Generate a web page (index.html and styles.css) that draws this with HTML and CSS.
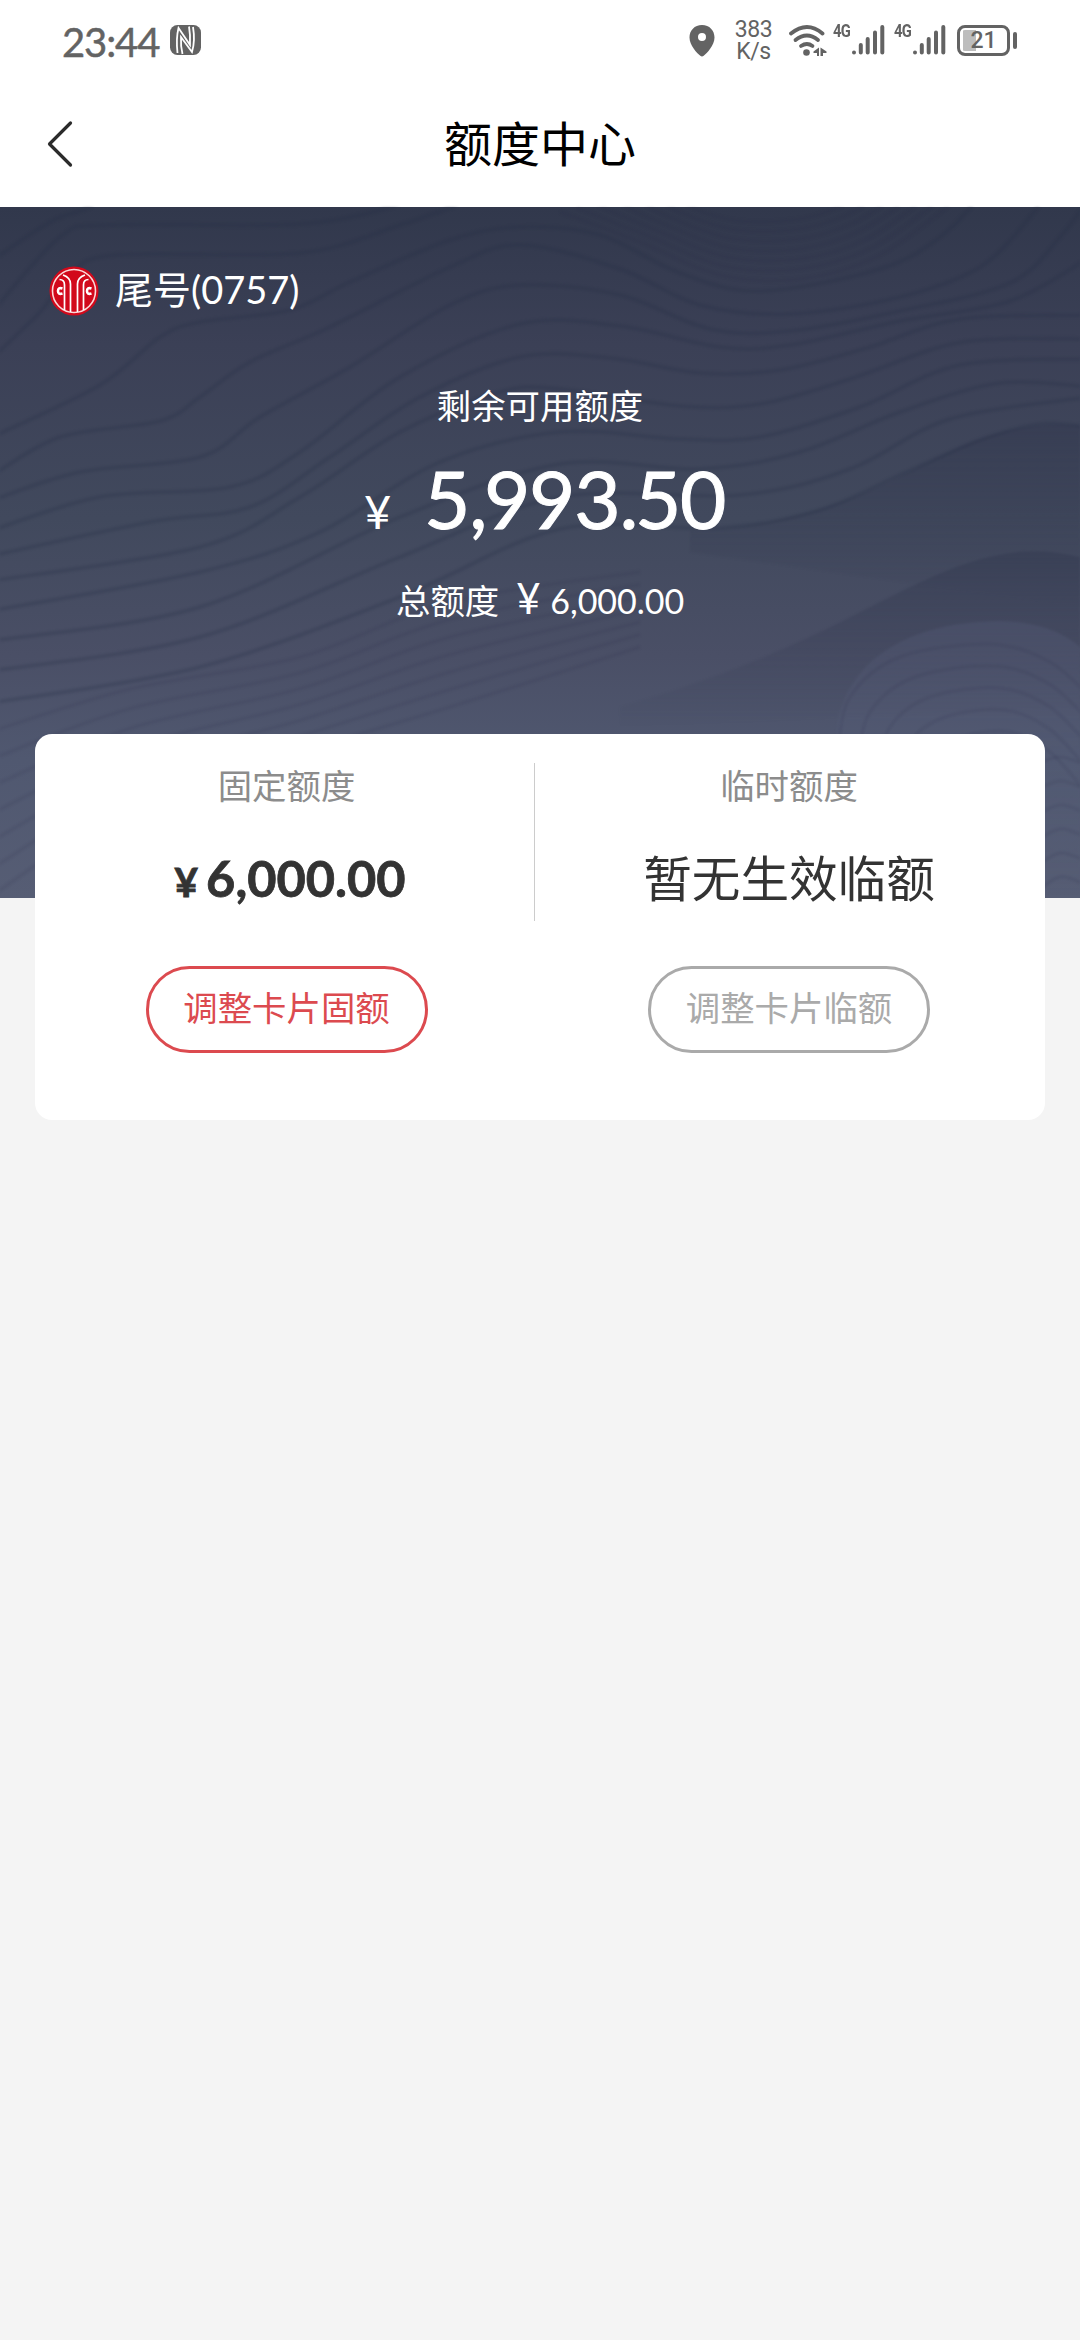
FILE: index.html
```
<!DOCTYPE html>
<html lang="zh-CN">
<head>
<meta charset="utf-8">
<title>额度中心</title>
<link rel="stylesheet" href="styles.css">
</head>
<body>
<header class="status">
  <span class="clock">23:44</span>
  <svg class="nfc" width="31" height="30" viewBox="0 0 31 30">
    <rect width="31" height="30" rx="7.5" fill="#636363"/>
    <path d="M7.5 28C6.5 19 6.5 11 8.5 3L20 20C20.3 13 20 7 19 1.5" fill="none" stroke="#fff" stroke-width="1.8"/>
    <path d="M23 2C24.500 11 24.500 19 22 27L11 12C10.700 18 11 23 12.500 29" fill="none" stroke="#fff" stroke-width="1.8"/>
  </svg>
  <span class="spacer"></span>
  <svg class="pin" width="26" height="32" viewBox="0 0 26 32">
    <path fill="#636363" fill-rule="evenodd" d="M13 0C5.500 0 .5 5.500 .5 12.500C.5 20.500 8 28 11.300 30.800Q13 32 14.700 30.800C18 28 25.500 20.500 25.500 12.500C25.500 5.500 20.500 0 13 0ZM13 8A4 4 0 1 1 13 16A4 4 0 1 1 13 8Z"/>
  </svg>
  <span class="speed"><span>383</span><span>K/s</span></span>
  <svg class="wifi" width="38" height="32" viewBox="0 0 38 32">
    <g fill="none" stroke="#636363" stroke-width="3.800" stroke-linecap="round">
      <path d="M2 8.500Q18 -4.500 33.500 8.500"/>
      <path d="M6.500 15Q18 6 29 15"/>
      <path d="M12 21Q18 17 23.500 21"/>
    </g>
    <circle cx="17.500" cy="27.500" r="3.300" fill="#636363"/>
    <path fill="#636363" d="M24.500 26.500L30 22.500V31H28V28H24.500ZM31.500 22.500L37.500 26.500V28H34V31H31.500Z"/>
  </svg>
  <span class="signal">
    <span class="net">4G</span>
    <svg width="34" height="32" viewBox="0 0 34 32" stroke="#636363" stroke-width="4" stroke-linecap="round"><path d="M3 28.500V28.600M9.800 21V28.500M16.700 15V28.500M24 8.500V28.500M31.300 3V28.500"/></svg>
  </span>
  <span class="signal">
    <span class="net">4G</span>
    <svg width="34" height="32" viewBox="0 0 34 32" stroke="#636363" stroke-width="4" stroke-linecap="round"><path d="M3 28.500V28.600M9.800 21V28.500M16.700 15V28.500M24 8.500V28.500M31.300 3V28.500"/></svg>
  </span>
  <span class="battery"><span class="cell">21</span><span class="tip"></span></span>
</header>

<nav class="nav">
  <svg class="back" width="28" height="48" viewBox="0 0 28 48"><path d="M24.500 3L3.500 24L24.500 45" fill="none" stroke="#2b2b2b" stroke-width="3.200" stroke-linecap="round" stroke-linejoin="round"/></svg>
  <h1 class="title">额度中心</h1>
</nav>

<section class="hero">
  <svg class="waves" viewBox="0 0 1080 691" aria-hidden="true">
    <defs>
      <linearGradient id="ridge" x1="0" y1="0" x2="0" y2="1"><stop offset="0" stop-color="#30364d" stop-opacity=".4"/><stop offset="1" stop-color="#30364d" stop-opacity="0"/></linearGradient>
      <linearGradient id="hill" x1="0" y1="0" x2="0" y2="1"><stop offset="0" stop-color="#626a8a" stop-opacity=".2"/><stop offset="1" stop-color="#626a8a" stop-opacity="0"/></linearGradient>
    </defs>
    <path fill="url(#ridge)" d="M690 324C780 320 850 295 900 270S1000 212 1080 219V400L690 345Z"/>
    <path fill="url(#ridge)" d="M620 500C760 460 830 420 900 385S1020 335 1080 350V500L620 520Z"/>
    <path fill="url(#hill)" d="M836 530C840 460 900 415 1000 414Q1050 415 1080 440V691H880Z"/>
    <g id="lines"></g>
  </svg>
  <div class="account">
    <svg class="logo" width="50" height="50" viewBox="0 0 50 50">
      <circle cx="25" cy="25" r="24.500" fill="#d2091b"/>
      <circle cx="25" cy="25" r="21.500" fill="none" stroke="#fbd9d9" stroke-width="1.600"/>
      <g fill="none" stroke="#fff" stroke-width="1.700">
        <path d="M14 9Q21.500 11.500 21.500 18V46M36 9Q28.500 11.500 28.500 18V46"/>
        <path d="M10.500 13.500Q15.500 13.500 15.500 19V44M39.500 13.500Q34.500 13.500 34.500 19V44"/>
        <path d="M13.500 22.500Q9 21 9 25Q9 29 13.500 27.500M42.500 22.500Q38 21 38 25Q38 29 42.500 27.500" stroke-width="2.600"/>
      </g>
    </svg>
    <span class="tail">尾号<span class="tail-no">(0757)</span></span>
  </div>
  <p class="label">剩余可用额度</p>
  <p class="amount"><span class="yen">¥</span><span class="big">5<i>,</i>993<i>.</i>50</span></p>
  <p class="total"><span>总额度</span><span class="yen-s">¥</span><span class="sum">6,000.00</span></p>
</section>

<main class="card">
  <section class="col">
    <h2 class="col-label">固定额度</h2>
    <p class="fixed"><span class="yen-b">¥</span><span class="fixed-sum">6,000.00</span></p>
    <button class="btn btn-red">调整卡片固额</button>
  </section>
  <section class="col split">
    <h2 class="col-label">临时额度</h2>
    <p class="none">暂无生效临额</p>
    <button class="btn btn-gray">调整卡片临额</button>
  </section>
</main>
<script src="waves.js"></script>
</body>
</html>
```
FILE: styles.css
```
* { box-sizing: border-box; }
body {
  margin: 0;
  min-height: 2340px;
  background: #f4f4f4;
  color: #333;
  font-family: Lato, "Noto Sans CJK SC", sans-serif;
}
h1, h2, p { margin: 0; font-weight: 400; }

.status {
  display: flex;
  align-items: flex-start;
  height: 84px;
  padding: 25px 63px 0 62px;
  background: #fff;
  color: #636363;
}
.clock { width: 108px; font-size: 40px; line-height: 34px; letter-spacing: -1.100px; -webkit-text-stroke: .5px; }
.spacer { flex: 1; }
.pin { margin-right: 19px; }
.speed {
  display: flex;
  flex-direction: column;
  width: 39px;
  margin: -6px 16px 0 0;
  text-align: center;
  font: 400 23px/22px Roboto, sans-serif;
  letter-spacing: -.5px;
}
.wifi { margin-right: 6px; }
.signal { display: flex; width: 52px; margin-right: 9px; }
.net { width: 18px; font: 700 18px/12px Roboto, sans-serif; letter-spacing: -1px; transform: scaleX(.82); transform-origin: left; }
.signal svg { flex: none; margin-top: -1px; }
.battery { display: flex; align-items: center; gap: 3px; margin-left: 2px; }
.cell {
  width: 53px;
  height: 31px;
  border: 3px solid #636363;
  border-radius: 8px;
  background: linear-gradient(90deg, #bdbdbd 13px, transparent 13px) 3px 0 no-repeat;
  box-shadow: inset 0 0 0 2px #fff;
  text-align: center;
  font: 500 23px/26px Roboto, sans-serif;
}
.tip { width: 4px; height: 17px; border-radius: 2px; background: #636363; }

.nav {
  display: grid;
  grid-template-columns: 100px 1fr 100px;
  align-items: center;
  height: 123px;
  padding: 0 0 3px;
  background: #fff;
  color: #000;
}
.back { margin-left: 46px; }
.title { text-align: center; font-size: 48px; line-height: 60px; }

.hero {
  position: relative;
  height: 691px;
  padding-top: 59px;
  background: linear-gradient(#31384c 0, #3b4056 20%, #41495d 45%, #4a4f66 65%, #505870 80%, #565d74 100%);
  color: #fff;
}
.waves { position: absolute; inset: 0; width: 100%; height: 100%; filter: blur(1.2px); }
.waves path.line { fill: none; stroke: #262c44; stroke-width: 4; stroke-opacity: .22; }
.waves path.fine { fill: none; stroke: #262c44; stroke-width: 3.5; stroke-opacity: .1; }
.account { position: relative; display: flex; align-items: center; height: 50px; padding-left: 49px; gap: 16px; }
.tail { margin-top: -4px; font-size: 38px; line-height: 50px; }
.label { position: relative; margin-top: 66px; text-align: center; font-size: 34.400px; line-height: 48px; }
.amount { position: relative; display: flex; align-items: baseline; padding-left: 364px; line-height: 90px; margin-top: 23px; }
.yen { width: 60px; font-size: 47px; }
.big { font-size: 80px; letter-spacing: -1.200px; -webkit-text-stroke: 1px; }
.big i { font-style: normal; letter-spacing: -3.500px; }
.total { position: relative; display: flex; align-items: baseline; padding-left: 396px; margin-top: 18px; font-size: 34.400px; line-height: 48px; }
.yen-s { width: 34px; margin-left: 17px; font-size: 42px; }
.sum { font-size: 34px; }

.card {
  display: grid;
  grid-template-columns: 503px 502px;
  width: 1010px;
  height: 386px;
  margin: -164px auto 0;
  position: relative;
  border-radius: 17px;
  background: #fff;
}
.col { display: flex; flex-direction: column; align-items: center; padding-top: 28px; }
.split { position: relative; }
.split::before { content: ""; position: absolute; left: -4px; top: 29px; width: 1px; height: 158px; background: #ccc; }
.col-label { color: #8c8c8c; font-size: 34.400px; line-height: 48px; }
.fixed { display: flex; align-items: baseline; gap: 8px; height: 70px; margin: 33px 0 1px 7px; font-weight: 700; line-height: 70px; }
.yen-b { font-size: 41px; -webkit-text-stroke: .8px; }
.fixed-sum { font-size: 50.500px; -webkit-text-stroke: .8px; }
.none { height: 70px; margin-top: 34px; font-size: 48.600px; line-height: 68px; }
.btn {
  width: 282px;
  height: 87px;
  margin-top: 52px;
  padding: 0 0 3px;
  border: 3px solid;
  border-radius: 44px;
  background: #fff;
  font: 400 34.400px/48px Lato, "Noto Sans CJK SC", sans-serif;
}
.btn-red { color: #dc4a4f; }
.btn-gray { color: #aaa; }
```
FILE: waves.js
```
const strong = [
  [[-10,55],[50,15],[90,0],[120,-20]],
  [[-10,108],[60,30],[110,18],[300,17],[400,-2],[460,-20]],
  [[-10,153],[40,105],[70,68],[115,48],[300,46],[400,18],[480,-10]],
  [[-10,231],[100,178],[160,130],[200,115],[290,103],[350,75],[450,33],[520,20],[600,28],[680,66],[760,84],[880,62],[940,30],[980,-10]],
  [[-10,270],[60,230],[160,214],[200,190],[250,155],[330,120],[450,60],[520,38],[620,62],[700,98],[790,107],[900,90],[980,60],[1030,10],[1050,-20]],
  [[-10,294],[80,265],[200,250],[260,210],[350,160],[450,98],[520,78],[620,88],[710,122],[790,124],[900,104],[1010,76],[1060,30],[1090,-10]],
  [[-10,324],[100,290],[230,280],[300,245],[400,170],[520,117],[620,119],[720,140],[790,138],[900,114],[1010,94],[1090,50]],
  [[-10,349],[150,315],[250,300],[330,250],[420,190],[520,150],[610,151],[700,166],[780,163],[870,140],[960,112],[1090,108]],
  [[-10,374],[200,340],[300,290],[400,225],[500,185],[560,182],[680,199],[760,197],[850,172],[940,140],[1000,132],[1090,132]],
  [[-10,404],[200,365],[320,325],[440,255],[560,225],[680,232],[760,230],[860,200],[960,158],[1090,152]],
  [[-10,434],[200,400],[400,310],[560,257],[700,262],[800,245],[900,205],[1000,176],[1090,180]],
  [[-10,464],[200,430],[400,350],[560,290],[740,288],[850,262],[950,212],[1090,190]],
  [[-10,496],[200,460],[400,390],[560,322],[720,321],[820,303],[900,268],[980,233],[1040,217],[1090,220]]
];
const faint = [];
const mix = (a, b, t) => a.map((p, i) => [p[0] + (b[i][0] - p[0]) * t, p[1] + (b[i][1] - p[1]) * t]);
const family = (a, b, n) => { for (let i = 0; i <= n; i++) faint.push(mix(a, b, i / n)); };

family([[560,5],[640,35],[720,68],[800,72],[880,48],[960,-10]], [[660,-20],[690,0],[740,14],[800,12],[840,0],[870,-15]], 6);
family([[-10,525],[130,482],[300,450],[450,395],[640,365]], [[-10,690],[130,600],[300,545],[450,500],[640,440]], 6);
family([[838,545],[850,490],[900,450],[990,437],[1050,455],[1090,490]], [[910,600],[930,550],[960,530],[1010,525],[1050,545],[1090,590]], 4);
family([[1030,560],[1060,550],[1090,560]], [[1030,690],[1060,670],[1090,680]], 5);

function curve(points) {
  let d = `M${points[0]}`;
  for (let i = 0; i < points.length - 1; i++) {
    const p = points[i - 1] || points[i], q = points[i], r = points[i + 1], s = points[i + 2] || r;
    d += `C${q[0] + (r[0] - p[0]) / 6},${q[1] + (r[1] - p[1]) / 6} ${r[0] - (s[0] - q[0]) / 6},${r[1] - (s[1] - q[1]) / 6} ${r}`;
  }
  return d;
}
function draw(list, name) {
  for (const points of list) {
    const path = document.createElementNS("http://www.w3.org/2000/svg", "path");
    path.setAttribute("class", name);
    path.setAttribute("d", curve(points));
    document.getElementById("lines").append(path);
  }
}
draw(strong, "line");
draw(faint, "fine");
```
